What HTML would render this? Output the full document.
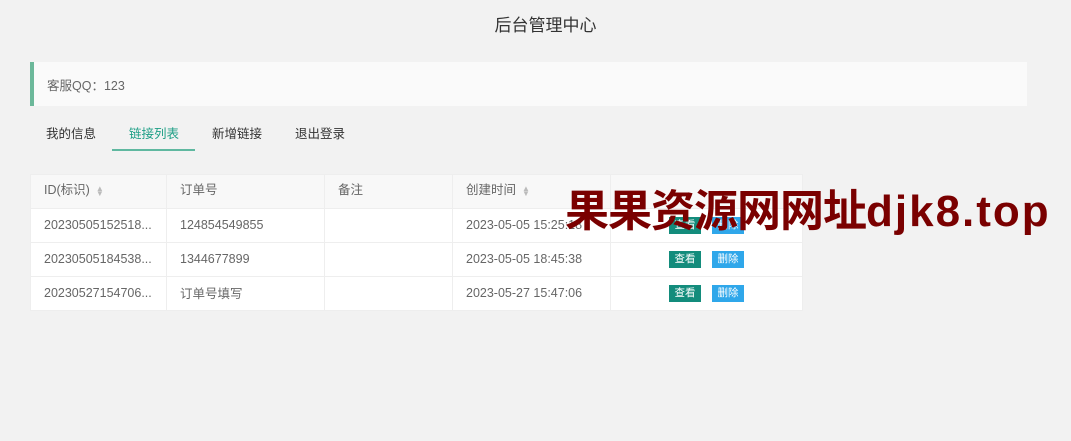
<!DOCTYPE html>
<html><head><meta charset="utf-8"><style>
body{margin:0;width:1071px;height:441px;background:#f2f2f2;font-family:"Liberation Sans","Noto Sans CJK SC",sans-serif;position:relative;overflow:hidden;color:#666}
.a{position:absolute}
.title{left:0;width:1091px;top:11px;text-align:center;font-size:17px;color:#333}
.qq{left:30px;top:62px;width:993px;height:44px;background:#fafafa;border-left:4px solid #6cb89a}
.qq span{position:absolute;left:13px;top:13px;font-size:12.5px;color:#666}
.tab{top:123px;font-size:12.5px;color:#333}
table{position:absolute;left:30px;top:174px;width:773px;border-collapse:collapse;font-size:12.5px;color:#666;background:#fff}
td{height:33px;border:1px solid #eee;padding:0 0 0 13px;white-space:nowrap}
td>i{font-style:normal;position:relative;top:-1px}
tr.h td{background:#f8f8f8}
tr.h td>i{top:-3px}
.s{display:inline-block;font-size:8px;color:#bbb;margin-left:6px;line-height:5px;vertical-align:middle}
.b{display:inline-block;width:32px;height:17px;line-height:17px;text-align:center;color:#fff;font-size:10.5px;margin-left:2px}
.g{background:#138c7c;margin-left:58px}.l{background:#2fa7ea;margin-left:11px}
.wm{left:565px;top:175px;font-size:44px;font-weight:bold;color:#7a0000;white-space:nowrap;letter-spacing:-1px}
.wm span{letter-spacing:2px}
</style></head><body>
<div class="a title">后台管理中心</div>
<div class="a qq"><span>客服QQ：123</span></div>
<div class="a tab" style="left:46px">我的信息</div>
<div class="a tab" style="left:129px;color:#1e9f86">链接列表</div>
<div class="a" style="left:112px;top:149px;width:83px;height:2px;background:#5fb8a0"></div>
<div class="a tab" style="left:212px">新增链接</div>
<div class="a tab" style="left:295px">退出登录</div>
<table>
<colgroup><col style="width:136px"><col style="width:158px"><col style="width:128px"><col style="width:158px"><col></colgroup>
<tr class="h"><td><i>ID(标识)<span class="s">▲<br>▼</span></i></td><td><i>订单号</i></td><td><i>备注</i></td><td><i>创建时间<span class="s">▲<br>▼</span></i></td><td></td></tr>
<tr><td><i>20230505152518...</i></td><td><i>124854549855</i></td><td></td><td><i>2023-05-05 15:25:18</i></td><td style="padding:0"><span class="b g">查看</span><span class="b l">删除</span></td></tr>
<tr><td><i>20230505184538...</i></td><td><i>1344677899</i></td><td></td><td><i>2023-05-05 18:45:38</i></td><td style="padding:0"><span class="b g">查看</span><span class="b l">删除</span></td></tr>
<tr><td><i>20230527154706...</i></td><td><i>订单号填写</i></td><td></td><td><i>2023-05-27 15:47:06</i></td><td style="padding:0"><span class="b g">查看</span><span class="b l">删除</span></td></tr>
</table>
<div class="a wm">果果资源网网址<span>djk8.top</span></div>
</body></html>
